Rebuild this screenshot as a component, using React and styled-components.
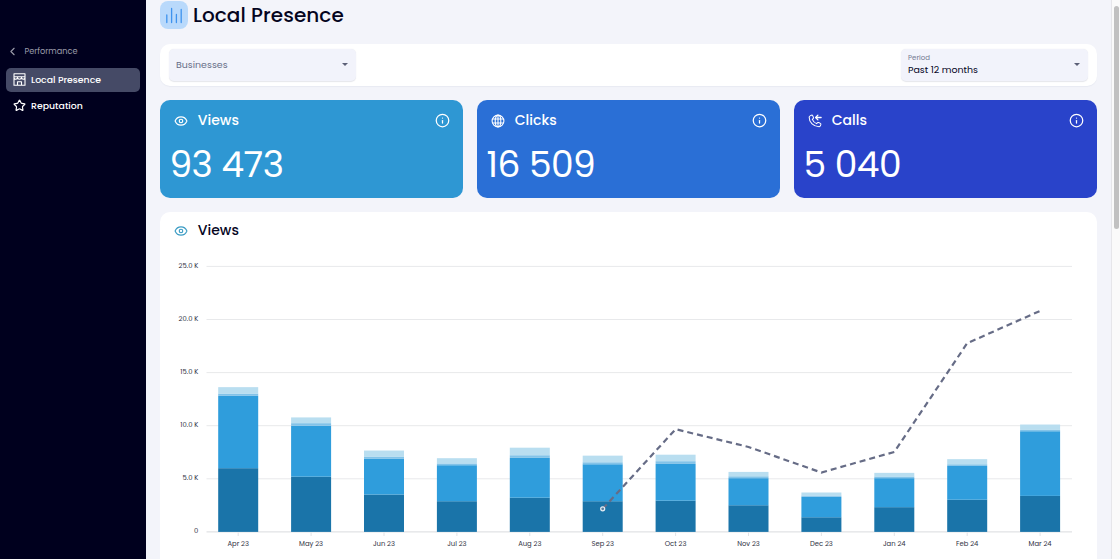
import React from "react"
import styled, { createGlobalStyle } from "styled-components"
import { Eye, Info, Star, ChevronLeft } from "lucide-react"

const GlobalStyle = createGlobalStyle`
    * {
        box-sizing: border-box;
    }

    body {
        margin: 0;
        overflow: hidden;
        font-family: Poppins, Inter, sans-serif;
        color: #05051e;
    }
`

const Layout = styled.div`
    display: flex;
    height: 559px;
    overflow: hidden;
    background: #f3f4fa;
`

const Sidebar = styled.nav`
    flex: 0 0 146px;
    padding: 43px 6px 0;
    background: #00001e;
`

const BackLink = styled.div`
    display: flex;
    align-items: center;
    gap: 5.5px;
    height: 16px;
    color: #9b9caa;
    font-size: 8.2px;
`

const NavItem = styled.div`
    display: flex;
    align-items: center;
    gap: 5px;
    height: 24px;
    margin-top: ${(props) => props.$top}px;
    padding-left: 7px;
    border-radius: 5px;
    background: ${(props) => (props.$active ? "#454a66" : "transparent")};
    color: #fff;
    font-size: 9.35px;
    font-weight: 500;
`

const Main = styled.main`
    flex: 1;
    min-width: 0;
    padding: 1px 14px 0;
`

const PageTitle = styled.h1`
    display: flex;
    align-items: center;
    gap: 5px;
    height: 28px;
    margin: 0;
    font-size: 20px;
    font-weight: 500;
    letter-spacing: 0.06px;
    white-space: nowrap;
`

const TitleIcon = styled.span`
    display: flex;
    align-items: center;
    justify-content: center;
    width: 28px;
    height: 28px;
    border-radius: 8px;
    background: #b9d9fb;
`

const Filters = styled.section`
    display: flex;
    justify-content: space-between;
    align-items: center;
    height: 42px;
    margin-top: 14.5px;
    padding: 0 9px;
    border-radius: 10px;
    background: #fff;
    box-shadow: 0 1px 1px rgba(40, 50, 90, 0.05);
`

const Select = styled.div`
    display: flex;
    align-items: center;
    justify-content: space-between;
    width: 187px;
    height: 32px;
    padding: 0 8px 0 7px;
    border-radius: 5px;
    background: #f2f3fb;
    box-shadow: 0 0.5px 1px rgba(40, 50, 90, 0.12);
    font-size: 9.45px;
`

const Placeholder = styled.span`
    color: #676e88;
`

const Field = styled.div`
    display: flex;
    flex-direction: column;
    gap: 1px;
    line-height: 12px;
`

const FieldLabel = styled.span`
    color: #737991;
    font-size: 7px;
    line-height: 10px;
`

const Caret = styled.span`
    border: 3px solid transparent;
    border-top-color: #5c6077;
    border-bottom: 0;
`

const Cards = styled.section`
    display: grid;
    grid-template-columns: repeat(3, 1fr);
    gap: 14px;
    margin-top: 14px;
`

const Card = styled.article`
    height: 98px;
    padding: 12px 13px 0 10px;
    border-radius: 10px;
    background: ${(props) => props.$color};
    color: #fff;
`

const CardHead = styled.div`
    display: flex;
    align-items: center;
    gap: 9.5px;
    height: 18px;
    padding-left: 4.3px;
    font-size: 14px;
    font-weight: 500;

    svg:last-child:not(:first-child) {
        margin-left: auto;
    }
`

const Amount = styled.div`
    margin: 14px 0 0 -0.6px;
    font-size: 36px;
    line-height: 42px;
    letter-spacing: -0.5px;
`

const ChartCard = styled.section`
    height: 370px;
    margin-top: 14px;
    padding: 10px 0 0;
    border-radius: 10px;
    background: #fff;
`

const ChartTitle = styled(CardHead)`
    padding-left: 14.3px;
`

const ChartSvg = styled.svg`
    display: block;
    width: 937px;
    height: 320px;

    text {
        fill: #30323f;
        font-family: Poppins, Inter, sans-serif;
        font-size: 6.8px;
    }
`

const Scrollbar = styled.div`
    flex: 0 0 9px;
    padding: 6px 1px 0 2px;
    border-left: 1px solid #e6e6ea;
    background: #fafafa;
`

const Thumb = styled.div`
    width: 5px;
    height: 223px;
    border-radius: 3px;
    background: #c1c1c1;
`

const BarsIcon = () => (
    <svg width="18" height="18" viewBox="0 0 18 18" stroke="#3f93ee" strokeWidth="1.3" strokeLinecap="round">
        <path d="M1.8 9v7.5M6.6 2.5v14M11.4 8.5v8M16.2 3.5v13" />
    </svg>
)

const StoreIcon = () => (
    <svg width="13" height="13" viewBox="0 0 26 26" fill="none" stroke="#fff" strokeWidth="2.2" strokeLinejoin="round">
        <path d="M2 1.5h22v23H2zM2 9c0 4.500 7 4.500 7 0c0 4.500 8 4.500 8 0c0 4.500 7 4.500 7 0M9 24.5v-7h8v7M2 7.500h22" />
    </svg>
)

const GlobeIcon = () => (
    <svg width="14" height="14" viewBox="0 0 14 14" fill="none" stroke="#fff" strokeWidth="1.1">
        <circle cx="7" cy="7" r="5.9" />
        <ellipse cx="7" cy="7" rx="2.8" ry="5.9" />
        <path d="M7 1.1v11.8M1.6 5h10.8M1.6 9h10.8" />
    </svg>
)

const CallIcon = () => (
    <svg width="14" height="14" viewBox="0 0 24 24" fill="none" stroke="#fff" strokeWidth="1.8" strokeLinecap="round" strokeLinejoin="round">
        <path d="M3.5 3.2L6 2c1-.4 1.600 0 2 .8l1.300 3c.3.8.1 1.400-.5 2L7.400 9.300c1.200 3 4 5.800 7.200 7.200l1.600-1.500c.6-.5 1.200-.6 2-.3l3 1.400c.8.4 1.100 1 .8 1.900l-.9 2.400c-.3.9-1 1.300-2 1.400C9.500 21.800 2 14.500 2 5.500c0-1 .5-1.900 1.500-2.300z" />
        <path d="M22.5 6h-9M17 2l-4 4l4 4" strokeWidth="2.2" />
    </svg>
)

const cards = [
    { title: "Views", amount: "93 473", color: "#2e97d3", icon: <Eye size={14} strokeWidth={2} /> },
    { title: "Clicks", amount: "16 509", color: "#2a6fd6", icon: <GlobeIcon /> },
    { title: "Calls", amount: "5 040", color: "#2943ca", icon: <CallIcon /> },
]

// running totals of each stack in thousands, from the bottom segment up
const months = [
    { label: "Apr 23", stack: [6.0, 12.81, 13.03, 13.63] },
    { label: "May 23", stack: [5.2, 10.0, 10.24, 10.78] },
    { label: "Jun 23", stack: [3.52, 6.91, 7.1, 7.66] },
    { label: "Jul 23", stack: [2.89, 6.28, 6.45, 6.94] },
    { label: "Aug 23", stack: [3.22, 6.97, 7.22, 7.93] },
    { label: "Sep 23", stack: [2.89, 6.37, 6.56, 7.18], trend: 2.17 },
    { label: "Oct 23", stack: [2.94, 6.4, 6.66, 7.27], trend: 9.67 },
    { label: "Nov 23", stack: [2.51, 5.06, 5.24, 5.65], trend: 8.0 },
    { label: "Dec 23", stack: [1.38, 3.3, 3.43, 3.71], trend: 5.59 },
    { label: "Jan 24", stack: [2.33, 5.06, 5.22, 5.56], trend: 7.53 },
    { label: "Feb 24", stack: [3.03, 6.21, 6.37, 6.85], trend: 17.77 },
    { label: "Mar 24", stack: [3.39, 9.48, 9.6, 10.11], trend: 20.81 },
]

const colors = ["#1a74a9", "#2f9ddc", "#83c3e8", "#b9def0"]
const ticks = [0, 5, 10, 15, 20, 25]

const xOf = (index) => 78.2 + index * 72.9
const yOf = (value) => 291.9 - value * 10.62

const Chart = () => {
    const trend = months
        .map((month, index) => (month.trend ? xOf(index) + "," + yOf(month.trend) : ""))
        .filter(Boolean)
        .join(" ")

    return (
        <ChartSvg viewBox="0 0 937 320">
            {ticks.map((tick) => (
                <g key={"tick_" + tick}>
                    <line x1="46.5" x2="912" y1={yOf(tick)} y2={yOf(tick)} stroke={tick ? "#e8e9eb" : "#d9dbde"} />
                    <text x="38.3" y={yOf(tick) + 1.4} textAnchor="end">{tick ? tick + ".0 K" : "0"}</text>
                </g>
            ))}
            {months.map((month, index) => (
                <g key={month.label}>
                    {month.stack.map((total, i) => (
                        <rect
                            key={i}
                            x={xOf(index) - 20}
                            y={yOf(total)}
                            width="40"
                            height={yOf(i ? month.stack[i - 1] : 0) - yOf(total)}
                            fill={colors[i]}
                        />
                    ))}
                    <line x1={xOf(index)} x2={xOf(index)} y1="292.5" y2="296" stroke="#e2e3e6" />
                    <text x={xOf(index)} y="306" textAnchor="middle">{month.label}</text>
                </g>
            ))}
            <polyline points={trend} fill="none" stroke="#666c86" strokeWidth="2.2" strokeDasharray="6 4" />
            <circle cx={xOf(5)} cy={yOf(2.17)} r="2" fill="#5f7f9e" stroke="#e6edf3" strokeWidth="1.2" />
        </ChartSvg>
    )
}

class App extends React.Component {
    render() {
        return (
            <>
                <GlobalStyle />
                <Layout>
                    <Sidebar>
                        <BackLink>
                            <ChevronLeft size={13} strokeWidth={2} />
                            Performance
                        </BackLink>
                        <NavItem $active $top={8.5}>
                            <StoreIcon />
                            Local Presence
                        </NavItem>
                        <NavItem $top={2}>
                            <Star size={13} strokeWidth={2.2} />
                            Reputation
                        </NavItem>
                    </Sidebar>
                    <Main>
                        <PageTitle>
                            <TitleIcon><BarsIcon /></TitleIcon>
                            Local Presence
                        </PageTitle>
                        <Filters>
                            <Select>
                                <Placeholder>Businesses</Placeholder>
                                <Caret />
                            </Select>
                            <Select>
                                <Field>
                                    <FieldLabel>Period</FieldLabel>
                                    Past 12 months
                                </Field>
                                <Caret />
                            </Select>
                        </Filters>
                        <Cards>
                            {cards.map((card) => (
                                <Card key={card.title} $color={card.color}>
                                    <CardHead>
                                        {card.icon}
                                        {card.title}
                                        <Info size={15} strokeWidth={2} />
                                    </CardHead>
                                    <Amount>{card.amount}</Amount>
                                </Card>
                            ))}
                        </Cards>
                        <ChartCard>
                            <ChartTitle>
                                <Eye size={14} strokeWidth={2} color="#3b9cc4" />
                                Views
                            </ChartTitle>
                            <Chart />
                        </ChartCard>
                    </Main>
                    <Scrollbar>
                        <Thumb />
                    </Scrollbar>
                </Layout>
            </>
        )
    }
}

export default App
